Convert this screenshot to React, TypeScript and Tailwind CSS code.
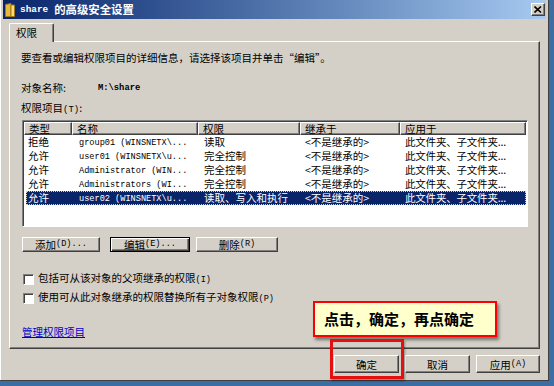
import React from "react";

const raised =
  "border border-t-white border-l-white border-r-[#404040] border-b-[#404040] shadow-[inset_-1px_-1px_0_#808080]";
const sunken =
  "border border-t-[#808080] border-l-[#808080] border-r-white border-b-white shadow-[inset_1px_1px_0_#404040]";

const cols = [48, 126, 102, 100, 126];

type Row = { type: string; name: string; perm: string; inh: string; app: string; sel?: boolean };
const rows: Row[] = [
  { type: "拒绝", name: "group01 (WINSNETX\\...", perm: "读取", inh: "<不是继承的>", app: "此文件夹、子文件夹..." },
  { type: "允许", name: "user01 (WINSNETX\\u...", perm: "完全控制", inh: "<不是继承的>", app: "此文件夹、子文件夹..." },
  { type: "允许", name: "Administrator (WIN...", perm: "完全控制", inh: "<不是继承的>", app: "此文件夹、子文件夹..." },
  { type: "允许", name: "Administrators (WI...", perm: "完全控制", inh: "<不是继承的>", app: "此文件夹、子文件夹..." },
  { type: "允许", name: "user02 (WINSNETX\\u...", perm: "读取、写入和执行", inh: "<不是继承的>", app: "此文件夹、子文件夹...", sel: true },
];

function Btn({ w, h, children, def }: { w: number; h: number; children: React.ReactNode; def?: boolean }) {
  return (
    <div
      className={
        "flex items-center justify-center bg-[#d4d0c8] text-[10.5px] leading-[11px] text-black " +
        (def
          ? "border border-black shadow-[inset_1px_1px_0_#fff,inset_-1px_-1px_0_#404040,inset_-2px_-2px_0_#808080]"
          : raised)
      }
      style={{ width: w, height: h }}
    >
      {children}
    </div>
  );
}

function Mono({ children }: { children: React.ReactNode }) {
  return <span className="font-['Liberation_Mono',monospace] text-[8.6px]">{children}</span>;
}

function Check({ children }: { children: React.ReactNode }) {
  return (
    <div className="flex items-center h-[12px] ml-[2px]">
      <div className={"w-[11px] h-[11px] bg-white " + sunken} />
      <span className="ml-[4px] text-[10.5px] leading-[12px]">{children}</span>
    </div>
  );
}

export default function App() {
  return (
    <div className="w-[554px] h-[386px] bg-[#3a6ea5] overflow-hidden font-['Noto_Sans_CJK_SC','Noto_Sans',sans-serif] text-black">
      <div className="relative w-[549px] h-[381px] bg-[#d4d0c8] border-r border-b border-r-[#404040] border-b-[#404040] shadow-[inset_1px_0_0_#fff]">
        {/* title bar */}
        <div className="ml-[3px] w-[543px] h-[19px] flex items-center bg-gradient-to-r from-[#0a246a] to-[#a6caf0]">
          <svg width="10" height="14" viewBox="0 0 10 14" className="ml-[2px]">
            <path d="M0.5 1.5 L6 0.5 L6 13.5 L0.5 13.5 Z" fill="#e8b93a" stroke="#a07818" strokeWidth="1" />
            <path d="M6 2 L9.5 2 L9.5 13.5 L6 13.5 Z" fill="#f7dc7c" stroke="#a07818" strokeWidth="1" />
          </svg>
          <div className="ml-[5px] flex items-center text-white font-bold">
            <span className="font-['Liberation_Mono',monospace] text-[9.4px] leading-[12px]">share</span>
            <span className="ml-[6px] text-[11.4px] leading-[13px]">的高级安全设置</span>
          </div>
          <div className="flex-1" />
          <div className={"mr-[1px] w-[14px] h-[13px] bg-[#d4d0c8] flex items-center justify-center " + raised}>
            <svg width="8" height="7" viewBox="0 0 8 7">
              <path d="M0.5 0.5 L7 6.5 M7 0.5 L0.5 6.5" stroke="#000" strokeWidth="1.6" />
            </svg>
          </div>
        </div>

        {/* tab + panel */}
        <div className="ml-[9px] mt-[4px]">
          <div className="relative z-10 w-[45px] h-[19px] -mb-[1px] bg-[#d4d0c8] border-t border-l border-r border-t-white border-l-white border-r-[#404040] rounded-t-[2px] shadow-[inset_-1px_0_0_#808080] pl-[6px] pt-[3px] text-[10.5px] leading-[12px]">
            权限
          </div>
          <div className="w-[531px] h-[308px] border border-t-white border-l-white border-r-[#404040] border-b-[#404040] shadow-[inset_-1px_-1px_0_#808080] pl-[11px] pt-[10px] text-[10.5px] leading-[12px]">
            <div className="h-[12px]">要查看或编辑权限项目的详细信息，请选择该项目并单击“编辑”。</div>
            <div className="h-[12px] mt-[18px] flex">
              <span className="w-[77px]">对象名称:</span>
              <span className="font-['Liberation_Mono',monospace] text-[8.8px] font-bold">M:\share</span>
            </div>
            <div className="h-[12px] mt-[8px]">
              权限项目<span className="font-['Liberation_Mono',monospace] text-[9px]">(T)</span>:
            </div>
            {/* list */}
            <div className={"mt-[6px] ml-[1px] w-[506px] h-[107px] bg-white p-[1px] " + sunken}>
              <div className="flex h-[13px]">
                {["类型", "名称", "权限", "继承于", "应用于"].map((h, i) => (
                  <div
                    key={h}
                    className={"h-[13px] bg-[#d4d0c8] pl-[4px] leading-[11px] " + raised}
                    style={{ width: cols[i] }}
                  >
                    {h}
                  </div>
                ))}
              </div>
              {rows.map((r, i) => (
                <div
                  key={i}
                  className={
                    "flex h-[14px] items-center leading-[14px] ml-[2px] whitespace-nowrap " +
                    (r.sel ? "bg-[#0a246a] text-white outline outline-1 outline-dotted outline-[#d4d0c8] -outline-offset-1" : "")
                  }
                  style={{ width: 500 }}
                >
                  <div className="pl-[2px]" style={{ width: cols[0] - 2 }}>{r.type}</div>
                  <div className="pl-[7px]" style={{ width: cols[1] }}>
                    <Mono>{r.name}</Mono>
                  </div>
                  <div className="pl-[6px]" style={{ width: cols[2] }}>{r.perm}</div>
                  <div className="pl-[5px]" style={{ width: cols[3] }}>{r.inh}</div>
                  <div className="pl-[5px] tracking-[-0.2px]" style={{ width: cols[4] - 4 }}>{r.app}</div>
                </div>
              ))}
            </div>
            {/* buttons */}
            <div className="mt-[10px] ml-[1px] flex">
              <Btn w={78} h={15}>
                添加<Mono>(D)...</Mono>
              </Btn>
              <div className="ml-[10px]">
                <Btn w={80} h={15} def>
                  编辑<Mono>(E)...</Mono>
                </Btn>
              </div>
              <div className="ml-[6px]">
                <Btn w={82} h={15}>
                  删除<Mono>(R)</Mono>
                </Btn>
              </div>
            </div>
            <div className="mt-[21px]">
              <Check>
                包括可从该对象的父项继承的权限<Mono>(I)</Mono>
              </Check>
            </div>
            <div className="mt-[7px]">
              <Check>
                使用可从此对象继承的权限替换所有子对象权限<Mono>(P)</Mono>
              </Check>
            </div>
            <div className="mt-[22px] ml-[1px] h-[12px] text-[#0000cc] underline">管理权限项目</div>
          </div>
        </div>

        {/* bottom buttons */}
        <div className="mt-[6px] ml-[334px] flex gap-[6px]">
          <Btn w={65} h={18}>确定</Btn>
          <Btn w={65} h={18}>取消</Btn>
          <Btn w={64} h={18}>
            应用<Mono>(A)</Mono>
          </Btn>
        </div>

        {/* callout overlay */}
        <div className="absolute left-[313px] top-[301px] w-[184px] h-[36px] bg-[#ffffcc] border-2 border-[#ff0000] shadow-[2px_3px_3px_rgba(0,0,0,0.45)] flex items-center pl-[9px] text-[15px] font-bold leading-[18px]">
          点击，确定，再点确定
        </div>
        <div className="absolute left-[330px] top-[339px] w-[74px] h-[40px] border-[3px] border-[#e41010] shadow-[1px_2px_2px_rgba(0,0,0,0.35)]" />
      </div>
    </div>
  );
}
